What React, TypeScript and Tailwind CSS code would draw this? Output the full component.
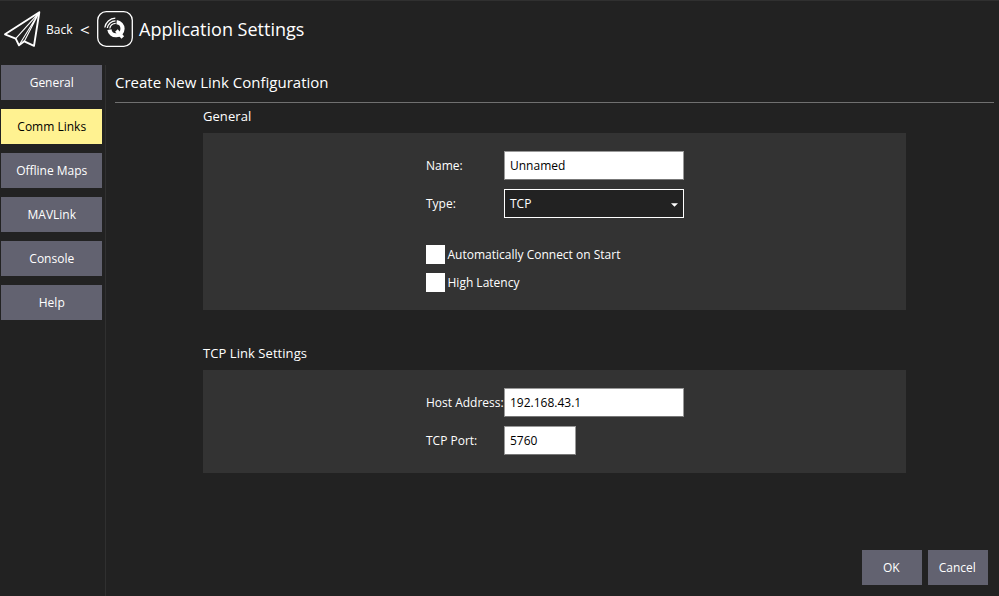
import React from 'react';

const navItems = ['General', 'Comm Links', 'Offline Maps', 'MAVLink', 'Console', 'Help'];

function PlaneIcon() {
  return (
    <svg className="block h-[40px] w-[42px] shrink-0" viewBox="0 9 42 40" fill="none" stroke="#fff" strokeLinejoin="round">
      <path d="M39.3 12.3 5 34.3 15.7 38.6 19 45.3 24.3 41.3 34 45.8Z" strokeWidth="1.9" />
      <path d="M39.3 12.3 15.7 38.6M39.3 12.3 19 45.3M39.3 12.3 24.3 41.3" strokeWidth="1.1" />
    </svg>
  );
}

function QIcon() {
  return (
    <svg className="block h-[36px] w-[36px] shrink-0" viewBox="97 11 36 36" fill="none" stroke="#fff">
      <rect x="97.7" y="11.7" width="34.6" height="34.6" rx="8.5" strokeWidth="1.3" />
      <path d="M116.6 22.1A6.6 6.6 0 1 1 109.4 29.6" strokeWidth="4.2" />
      <path d="M116.4 30.6 122.8 37.4" strokeWidth="3.6" />
      <path d="M104.8 27.5A11 11 0 0 1 115.3 18.2M107.3 28A8.5 8.5 0 0 1 115.5 20.8M109.8 28.5A6 6 0 0 1 115.7 23.4" stroke="#222" strokeWidth="2.8" />
      <path d="M104.8 27.5A11 11 0 0 1 115.3 18.2M107.3 28A8.5 8.5 0 0 1 115.5 20.8M109.8 28.5A6 6 0 0 1 115.7 23.4" strokeWidth="1.3" />
    </svg>
  );
}

function Section({ title, className, children }: { title: string; className: string; children: React.ReactNode }) {
  return (
    <section className="w-[703px]">
      <h2 className="h-[26px] text-[13px] leading-[18px] tracking-[0.06px]">{title}</h2>
      <div className={`bg-[#333333] pl-[223px] ${className}`}>{children}</div>
    </section>
  );
}

function Field({ label, children }: { label: string; children: React.ReactNode }) {
  return (
    <label className="flex h-[29px] items-center">
      <span className="w-[78px] shrink-0 whitespace-nowrap leading-[29px]">{label}</span>
      {children}
    </label>
  );
}

function TextBox({ value, width }: { value: string; width: string }) {
  return (
    <input
      readOnly
      value={value}
      className={`h-[29px] border border-[#999999] border-b-[#777777] bg-white px-[5px] text-black outline-none ${width}`}
    />
  );
}

function Check({ label }: { label: string }) {
  return (
    <div className="flex h-[19px] items-center gap-[2.5px]">
      <span className="h-[19px] w-[19px] bg-white" />
      <span className="leading-[19px]">{label}</span>
    </div>
  );
}

export default function App() {
  return (
    <div className="flex h-[596px] w-[999px] flex-col overflow-hidden border-t border-[#303030] bg-[#222222] font-['Open_Sans',sans-serif] text-[12px] text-white">
      <header className="flex h-[64px] shrink-0 items-start pt-[8px]">
        <PlaneIcon />
        <span className="ml-[4px] w-[34px] leading-[41px]">Back</span>
        <span className="w-[17px] text-[17px] leading-[41px]">&lt;</span>
        <div className="pt-[2px]"><QIcon /></div>
        <h1 className="ml-[6px] text-[18px] leading-[40px]">Application Settings</h1>
      </header>
      <div className="flex min-h-0 flex-1">
        <nav className="flex w-[106px] shrink-0 flex-col gap-[9px] border-r border-[#303030] pl-[1px]">
          {navItems.map((item) => (
            <button
              key={item}
              className={`h-[35px] w-[101px] shrink-0 pl-[0.5px] leading-[35px] ${item === 'Comm Links' ? 'bg-[#fff291] text-black' : 'bg-[#626270]'}`}
            >
              {item}
            </button>
          ))}
        </nav>
        <main className="flex flex-1 flex-col pl-[9px]">
          <div className="h-[38px] w-[879px] border-b border-[#707070] text-[15px] leading-[34px]">Create New Link Configuration</div>
          <div className="flex flex-col gap-[34px] pt-[4px] pl-[88px]">
            <Section title="General" className="h-[177px] pt-[18px]">
              <div className="flex flex-col gap-[9px]">
                <Field label="Name:"><TextBox value="Unnamed" width="w-[180px]" /></Field>
                <Field label="Type:">
                  <span className="flex h-[29px] w-[180px] items-center justify-between border border-white bg-[#222222] pr-[5px] pl-[5px] leading-[27px]">
                    TCP
                    <svg className="mt-[2px] h-[4px] w-[7px]" viewBox="0 0 7 4"><path d="M0 .3h7L3.5 3.8Z" fill="#fff" /></svg>
                  </span>
                </Field>
              </div>
              <div className="flex flex-col gap-[9px] pt-[27px]">
                <Check label="Automatically Connect on Start" />
                <Check label="High Latency" />
              </div>
            </Section>
            <Section title="TCP Link Settings" className="h-[103px] pt-[18px]">
              <div className="flex flex-col gap-[9px]">
                <Field label="Host Address:"><TextBox value="192.168.43.1" width="w-[180px]" /></Field>
                <Field label="TCP Port:"><TextBox value="5760" width="w-[72px]" /></Field>
              </div>
            </Section>
          </div>
          <footer className="mt-auto flex justify-end gap-[6px] pr-[11px] pb-[11px]">
            <button className="h-[35px] w-[60px] bg-[#626270] pr-[1.5px] leading-[35px]">OK</button>
            <button className="h-[35px] w-[60px] bg-[#626270] pr-[1.5px] leading-[35px]">Cancel</button>
          </footer>
        </main>
      </div>
    </div>
  );
}
